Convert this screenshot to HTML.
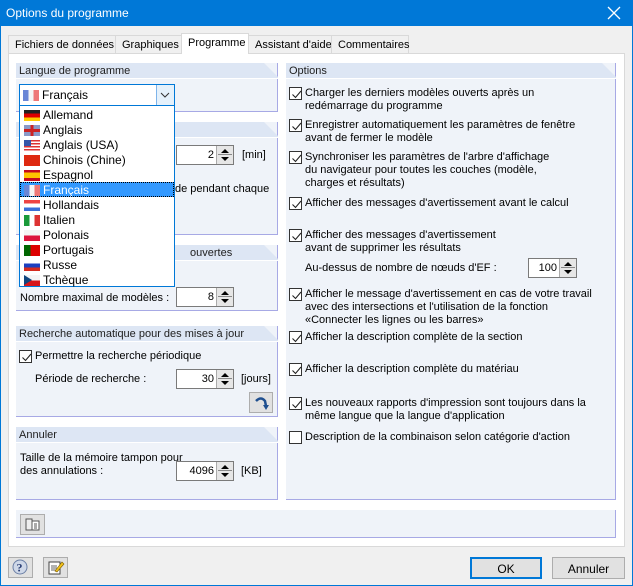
<!DOCTYPE html>
<html><head><meta charset="utf-8"><style>
*{box-sizing:border-box;margin:0;padding:0}
body{width:633px;height:586px;background:#f0f0f0;font-family:"Liberation Sans",Arial,sans-serif;font-size:11px;color:#000;position:relative;overflow:hidden}
.a{position:absolute}
.win{left:0;top:0;width:633px;height:586px;border:1px solid #0078d7}
.title{left:0;top:0;width:633px;height:26px;background:#0078d7;color:#fff;font-size:12px;padding:6px 0 0 6px}
.tab{top:35px;height:19px;border:1px solid #d9d9d9;border-bottom:none;background:#f0f0f0;padding:3px 0 0 6px;white-space:nowrap}
.content{left:8px;top:53px;width:617px;height:494px;background:#fff;border:1px solid #d9d9d9}
.pan{background:#eff3f9;border-right:1px solid #a7a9e5;border-bottom:1px solid #a7a9e5}
.ph{position:absolute;left:0;top:0;right:-1px;height:16px;background:#dde6f4;padding:2px 0 0 3px;color:#1e1e1e;white-space:nowrap;clip-path:polygon(0 0,calc(100% - 14px) 0,100% 14px,100% 100%,0 100%)}
.ph:after{content:"";position:absolute;left:0;right:0;bottom:0;height:1px;background:#fff}
.t{position:absolute;white-space:nowrap;line-height:13px}
.spin{position:absolute;height:20px;background:#fff;border:1px solid #7a7a7a;text-align:right;padding:3px 19px 0 0}
.spin:after{content:"";position:absolute;right:0;top:0;width:16px;height:18px;background:#e6e6e6;border-left:1px solid #aaa}
.spin b{position:absolute;right:4px;width:0;height:0;border-left:4px solid transparent;border-right:4px solid transparent;z-index:2}
.spin .u{top:3px;border-bottom:4px solid #000}
.spin .d{top:11px;border-top:4px solid #000}
.spin i{position:absolute;right:1px;top:8px;width:14px;height:1px;background:#888;z-index:2}
.cb{position:absolute;width:13px;height:13px;border:1px solid #333;background:#fff}
.cb svg{position:absolute;left:1px;top:1px}
.flag{position:absolute;left:4px;width:16px;height:11px}
.it{position:absolute;left:0;width:154px;height:15px;padding:1px 0 0 23px;font-size:12px}
.btn{position:absolute;background:#e1e1e1;border:1px solid #adadad;text-align:center;padding-top:4px}
</style></head><body>
<div class="a title">Options du programme</div>
<svg class="a" style="left:607px;top:6px" width="14" height="14"><path d="M1 1L13 13M13 1L1 13" stroke="#fff" stroke-width="1.3"/></svg>
<div class="a win" style="border-top:none;top:26px;height:560px"></div>

<div class="a tab" style="left:8px;width:108px">Fichiers de données</div>
<div class="a tab" style="left:115px;width:67px">Graphiques</div>
<div class="a tab" style="left:248px;width:84px">Assistant d'aide</div>
<div class="a tab" style="left:331px;width:78px">Commentaires</div>
<div class="a content"></div>
<div class="a tab" style="left:181px;top:33px;width:68px;height:21px;background:#fff;z-index:3">Programme</div>

<div class="a pan" style="left:16px;top:63px;width:262px;height:49px"><div class="ph">Langue de programme</div></div>
<div class="a" style="left:19px;top:84px;width:156px;height:22px;border:1px solid #0078d7;background:#fff;font-size:12px">
<div class="flag" style="left:3px;top:5px;background:linear-gradient(90deg,#6a86d6 33%,#f4f4f4 33% 66%,#ee7777 66%)"></div>
<div class="t" style="left:22px;top:4px">Français</div>
<div class="a" style="left:136px;top:0;width:18px;height:20px;border-left:1px solid #7eb4ea;background:#e5f1fb"></div>
<svg class="a" style="left:140px;top:7px" width="10" height="6"><path d="M1 1L5 5L9 1" stroke="#333" fill="none"/></svg>
</div>

<div class="a pan" style="left:16px;top:122px;width:262px;height:113px"><div class="ph"></div></div>
<div class="spin" style="left:176px;top:145px;width:58px">2<b class="u"></b><i></i><b class="d"></b></div>
<div class="t" style="left:242px;top:149px">[min]</div>
<div class="t" style="left:175px;top:183px">de pendant chaque</div>

<div class="a pan" style="left:16px;top:245px;width:262px;height:66px"><div class="ph"><span style="position:absolute;left:174px">ouvertes</span></div></div>
<div class="t" style="left:20px;top:292px">Nombre maximal de modèles :</div>
<div class="spin" style="left:176px;top:287px;width:58px">8<b class="u"></b><i></i><b class="d"></b></div>

<div class="a pan" style="left:16px;top:326px;width:262px;height:91px"><div class="ph">Recherche automatique pour des mises à jour</div></div>
<div class="cb" style="left:19px;top:350px"><svg width="11" height="11"><path d="M1.5 5.5L4.5 8.5L10 2" stroke="#222" fill="none" stroke-width="1.1"/></svg></div>
<div class="t" style="left:35px;top:350px">Permettre la recherche périodique</div>
<div class="t" style="left:35px;top:373px">Période de recherche :</div>
<div class="spin" style="left:176px;top:369px;width:58px">30<b class="u"></b><i></i><b class="d"></b></div>
<div class="t" style="left:241px;top:373px">[jours]</div>
<div class="btn" style="left:249px;top:392px;width:24px;height:21px;padding:0"><svg width="22" height="19"><path d="M6 8Q11 3 15 8L16 13" stroke="#1f4f8f" stroke-width="2.5" fill="none"/><path d="M13 12L16 17L19 12Z" fill="#1f4f8f"/></svg></div>

<div class="a pan" style="left:16px;top:427px;width:262px;height:73px"><div class="ph">Annuler</div></div>
<div class="t" style="left:20px;top:452px">Taille de la mémoire tampon pour<br>des annulations :</div>
<div class="spin" style="left:176px;top:461px;width:58px">4096<b class="u"></b><i></i><b class="d"></b></div>
<div class="t" style="left:241px;top:465px">[KB]</div>

<div class="a pan" style="left:286px;top:63px;width:330px;height:437px"><div class="ph">Options</div></div>

<div class="a pan" style="left:16px;top:510px;width:600px;height:28px"></div>
<div class="btn" style="left:20px;top:514px;width:25px;height:21px;padding:0"><svg width="23" height="19"><rect x="5" y="4" width="6" height="11" fill="#eee" stroke="#555"/><rect x="11" y="6" width="7" height="9" fill="#fff" stroke="#555"/><path d="M13 9h3M13 11h3M13 13h3" stroke="#555"/></svg></div>

<div class="btn" style="left:8px;top:557px;width:25px;height:21px;padding:0"><svg width="23" height="19"><circle cx="11" cy="9" r="7" fill="#cfd8e8" stroke="#6b7fa5"/><text x="7.5" y="13.5" font-size="12" font-weight="bold" fill="#2b3f75" font-family="Liberation Serif">?</text></svg></div>
<div class="btn" style="left:43px;top:557px;width:25px;height:21px;padding:0"><svg width="23" height="19"><rect x="5" y="4" width="11" height="12" fill="#fff" stroke="#444"/><path d="M7 8h6M7 10h6M7 12h5" stroke="#666"/><path d="M11 13L18 4L20 6L13 14Z" fill="#f2c21b" stroke="#7a5c00" stroke-width=".6"/></svg></div>
<div class="btn" style="left:470px;top:557px;width:72px;height:22px;border:2px solid #0078d7;padding-top:3px;font-size:12px">OK</div>
<div class="btn" style="left:552px;top:557px;width:73px;height:22px;font-size:12px">Annuler</div>

<div class="a" style="left:19px;top:105px;width:156px;height:182px;background:#fff;border:1px solid #0078d7;z-index:5">
<div class="it" style="top:1px"><div class="flag" style="top:3px;background:linear-gradient(#222 33%,#d00 33% 66%,#fc0 66%)"></div>Allemand</div>
<div class="it" style="top:16px"><div class="flag" style="top:3px;background:linear-gradient(90deg,transparent 40%,#c22 40% 60%,transparent 60%),linear-gradient(transparent 35%,#c22 35% 65%,transparent 65%),#8a9ac8"></div>Anglais</div>
<div class="it" style="top:31px"><div class="flag" style="top:3px;background:linear-gradient(90deg,#3556a8 45%,transparent 45%) 0 0/100% 55% no-repeat,repeating-linear-gradient(#d33 0 1.5px,#fff 1.5px 3px)"></div>Anglais (USA)</div>
<div class="it" style="top:46px"><div class="flag" style="top:3px;background:#de2910"></div>Chinois (Chine)</div>
<div class="it" style="top:61px"><div class="flag" style="top:3px;background:linear-gradient(#c60b1e 25%,#ffc400 25% 75%,#c60b1e 75%)"></div>Espagnol</div>
<div class="it" style="top:76px;background:#3399ff;color:#fff;outline:1px dotted #000;outline-offset:-1px"><div class="flag" style="top:3px;background:linear-gradient(90deg,#6a86d6 33%,#f4f4f4 33% 66%,#ee7777 66%)"></div>Français</div>
<div class="it" style="top:91px"><div class="flag" style="top:3px;background:linear-gradient(#e44 33%,#fff 33% 66%,#3a6fd8 66%)"></div>Hollandais</div>
<div class="it" style="top:106px"><div class="flag" style="top:3px;background:linear-gradient(90deg,#1a9a3a 33%,#fff 33% 66%,#d33 66%)"></div>Italien</div>
<div class="it" style="top:121px"><div class="flag" style="top:3px;background:linear-gradient(#f4f4f4 50%,#dc143c 50%)"></div>Polonais</div>
<div class="it" style="top:136px"><div class="flag" style="top:3px;background:linear-gradient(90deg,#060 40%,#d00 40%)"></div>Portugais</div>
<div class="it" style="top:151px"><div class="flag" style="top:3px;background:linear-gradient(#fff 33%,#1c3fbf 33% 66%,#d52b1e 66%)"></div>Russe</div>
<div class="it" style="top:166px"><div class="flag" style="top:3px;background:linear-gradient(#f4f4f4 50%,#d7141a 50%)"><div style="position:absolute;left:0;top:0;border-left:8px solid #11457e;border-top:5.5px solid transparent;border-bottom:5.5px solid transparent"></div></div>Tchèque</div>
</div>

<div class="cb" style="left:289px;top:87px"><svg width="11" height="11"><path d="M1.5 5.5L4.5 8.5L10 2" stroke="#222" fill="none" stroke-width="1.1"/></svg></div>
<div class="t" style="left:305px;top:87px">Charger les derniers modèles ouverts après un<br>redémarrage du programme</div>
<div class="cb" style="left:289px;top:119px"><svg width="11" height="11"><path d="M1.5 5.5L4.5 8.5L10 2" stroke="#222" fill="none" stroke-width="1.1"/></svg></div>
<div class="t" style="left:305px;top:119px">Enregistrer automatiquement les paramètres de fenêtre<br>avant de fermer le modèle</div>
<div class="cb" style="left:289px;top:151px"><svg width="11" height="11"><path d="M1.5 5.5L4.5 8.5L10 2" stroke="#222" fill="none" stroke-width="1.1"/></svg></div>
<div class="t" style="left:305px;top:151px">Synchroniser les paramètres de l'arbre d'affichage<br>du navigateur pour toutes les couches (modèle,<br>charges et résultats)</div>
<div class="cb" style="left:289px;top:197px"><svg width="11" height="11"><path d="M1.5 5.5L4.5 8.5L10 2" stroke="#222" fill="none" stroke-width="1.1"/></svg></div>
<div class="t" style="left:305px;top:197px">Afficher des messages d'avertissement avant le calcul</div>
<div class="cb" style="left:289px;top:229px"><svg width="11" height="11"><path d="M1.5 5.5L4.5 8.5L10 2" stroke="#222" fill="none" stroke-width="1.1"/></svg></div>
<div class="t" style="left:305px;top:229px">Afficher des messages d'avertissement<br>avant de supprimer les résultats</div>
<div class="t" style="left:305px;top:262px">Au-dessus de nombre de nœuds d'EF :</div>
<div class="spin" style="left:528px;top:258px;width:49px">100<b class="u"></b><i></i><b class="d"></b></div>
<div class="cb" style="left:289px;top:288px"><svg width="11" height="11"><path d="M1.5 5.5L4.5 8.5L10 2" stroke="#222" fill="none" stroke-width="1.1"/></svg></div>
<div class="t" style="left:305px;top:288px">Afficher le message d'avertissement en cas de votre travail<br>avec des intersections et l'utilisation de la fonction<br>«Connecter les lignes ou les barres»</div>
<div class="cb" style="left:289px;top:331px"><svg width="11" height="11"><path d="M1.5 5.5L4.5 8.5L10 2" stroke="#222" fill="none" stroke-width="1.1"/></svg></div>
<div class="t" style="left:305px;top:331px">Afficher la description complète de la section</div>
<div class="cb" style="left:289px;top:363px"><svg width="11" height="11"><path d="M1.5 5.5L4.5 8.5L10 2" stroke="#222" fill="none" stroke-width="1.1"/></svg></div>
<div class="t" style="left:305px;top:363px">Afficher la description complète du matériau</div>
<div class="cb" style="left:289px;top:397px"><svg width="11" height="11"><path d="M1.5 5.5L4.5 8.5L10 2" stroke="#222" fill="none" stroke-width="1.1"/></svg></div>
<div class="t" style="left:305px;top:397px">Les nouveaux rapports d'impression sont toujours dans la<br>même langue que la langue d'application</div>
<div class="cb" style="left:289px;top:431px"></div>
<div class="t" style="left:305px;top:431px">Description de la combinaison selon catégorie d'action</div>
</body></html>
